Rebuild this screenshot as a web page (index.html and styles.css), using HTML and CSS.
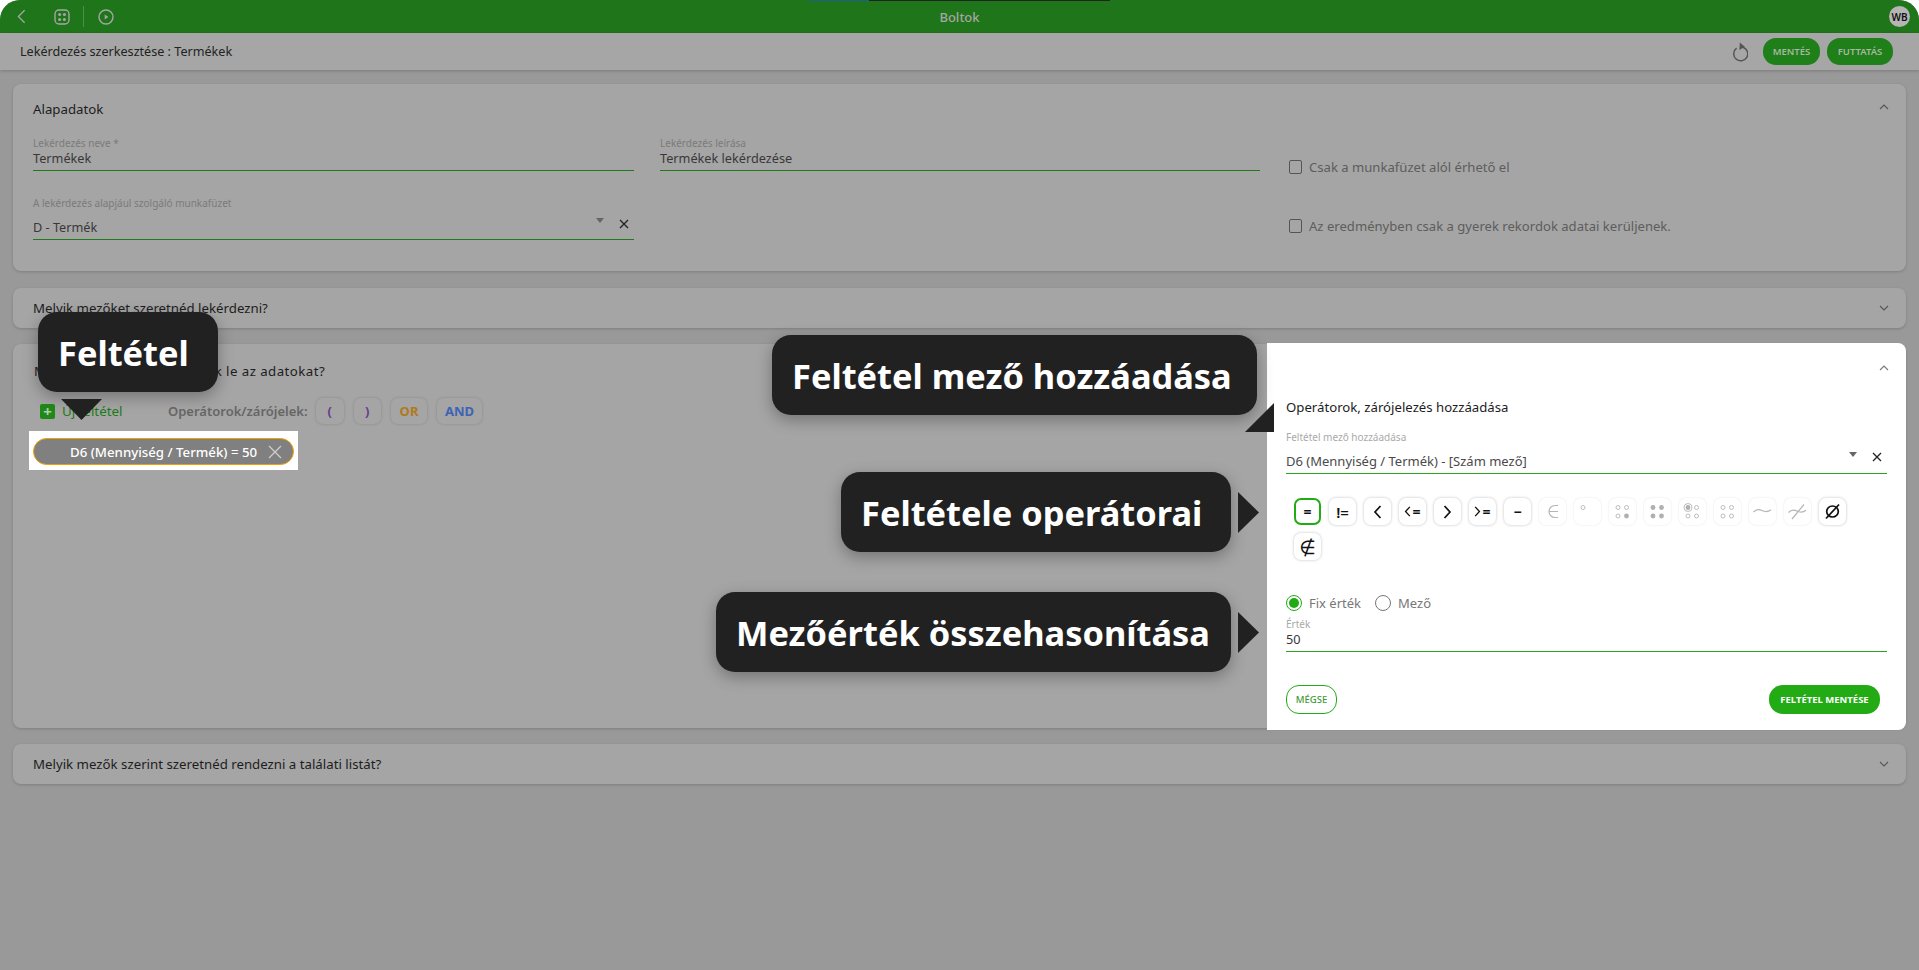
FILE: index.html
```html
<!DOCTYPE html>
<html lang="en">
<head>
  <meta charset="UTF-8">
  <title>Lekérdezés szerkesztése</title>
  <link rel="stylesheet" href="styles.css">
</head>
<body>
  <div class="app">
    <div class="progress"><span class="progress-done"></span><span class="progress-rest"></span></div>

    <header class="topbar">
      <div class="topbar-left">
        <svg class="top-icon back" viewBox="0 0 10 16"><path d="M8.5 1 1.5 8l7 7"/></svg>
        <svg class="top-icon grid-icon" viewBox="0 0 16 16"><rect x="1" y="1" width="14" height="14" rx="4"/><circle class="dot" cx="5.6" cy="5.6" r="1.5"/><circle class="dot" cx="10.4" cy="5.6" r="1.5"/><circle class="dot" cx="5.6" cy="10.4" r="1.5"/><circle class="dot" cx="10.4" cy="10.4" r="1.5"/></svg>
        <span class="top-sep"></span>
        <svg class="top-icon play" viewBox="0 0 16 16"><circle cx="8" cy="8" r="7"/><path class="dot" d="M6.7 5.4 10.4 8l-3.7 2.6z"/></svg>
      </div>
      <div class="topbar-title">Boltok</div>
      <div class="topbar-right"><span class="avatar">WB</span></div>
    </header>

    <div class="subbar">
      <div class="subbar-title">Lekérdezés szerkesztése : Termékek</div>
      <svg class="refresh" viewBox="0 0 16 20"><path d="M4.6 6.2a7 7 0 1 0 6.4-1"/><path class="fill" d="M7.8 0.6 12.8 4.8 7.4 8z"/></svg>
      <button class="btn-top btn-save">MENTÉS</button>
      <button class="btn-top btn-run">FUTTATÁS</button>
    </div>

    <main class="content">
      <section class="card card-base">
        <div class="card-title">Alapadatok</div>
        <svg class="chev chev-abs" viewBox="0 0 10 6"><path d="M1 5 5 1l4 4"/></svg>
        <div class="base-grid">
          <div class="field">
            <div class="field-label">Lekérdezés neve *</div>
            <div class="field-value">Termékek</div>
          </div>
          <div class="field">
            <div class="field-label">Lekérdezés leírása</div>
            <div class="field-value">Termékek lekérdezése</div>
          </div>
          <label class="check check-first"><span class="box"></span>Csak a munkafüzet alól érhető el</label>

          <div class="field field-select">
            <div class="field-label">A lekérdezés alapjául szolgáló munkafüzet</div>
            <div class="select-row">
              <div class="field-value">D - Termék</div>
              <span class="caret"></span>
              <svg class="clear" viewBox="0 0 10 10"><path d="M1 1l8 8M9 1 1 9"/></svg>
            </div>
          </div>
          <div></div>
          <label class="check check-second"><span class="box"></span>Az eredményben csak a gyerek rekordok adatai kerüljenek.</label>
        </div>
      </section>

      <section class="card card-row">
        <div class="card-title">Melyik mezőket szeretnéd lekérdezni?</div>
        <svg class="chev" viewBox="0 0 10 6"><path d="M1 1l4 4 4-4"/></svg>
      </section>

      <section class="card card-filter">
        <div class="filter-left">
          <div class="card-title filter-title">Milyen szűrés alapján kérjük le az adatokat?</div>
          <div class="toolbar">
            <span class="new-cond"><span class="plus">+</span>Új feltétel</span>
            <span class="ops-label">Operátorok/zárójelek:</span>
            <span class="tool tool-paren">(</span>
            <span class="tool tool-paren">)</span>
            <span class="tool tool-or">OR</span>
            <span class="tool tool-and">AND</span>
          </div>
          <div class="spot">
            <div class="chip">
              <span>D6 (Mennyiség / Termék) = 50</span>
              <svg class="chip-x" viewBox="0 0 14 14"><path d="M1 1l12 12M13 1 1 13"/></svg>
            </div>
          </div>
        </div>

        <div class="panel">
          <div class="panel-top"><svg class="chev chev-light" viewBox="0 0 10 6"><path d="M1 5 5 1l4 4"/></svg></div>
          <div class="panel-title">Operátorok, zárójelezés hozzáadása</div>
          <div class="field field-light field-cond">
            <div class="field-label">Feltétel mező hozzáadása</div>
            <div class="select-row">
              <div class="field-value">D6 (Mennyiség / Termék) - [Szám mező]</div>
              <span class="caret"></span>
              <svg class="clear" viewBox="0 0 10 10"><path d="M1 1l8 8M9 1 1 9"/></svg>
            </div>
          </div>

          <div class="op-list">
            <span class="op op-active">=</span>
            <span class="op op-ne">!=</span>
            <span class="op"><svg class="op-chev" viewBox="0 0 9 14"><path d="M7.5 1 2 7l5.5 6"/></svg></span>
            <span class="op"><svg class="op-chev op-chev-s" viewBox="0 0 9 14"><path d="M7.5 1 2 7l5.5 6"/></svg>=</span>
            <span class="op"><svg class="op-chev" viewBox="0 0 9 14"><path d="M1.5 1 7 7l-5.5 6"/></svg></span>
            <span class="op"><svg class="op-chev op-chev-s" viewBox="0 0 9 14"><path d="M1.5 1 7 7l-5.5 6"/></svg>=</span>
            <span class="op">−</span>
            <span class="op op-off"><svg class="op-svg" viewBox="0 0 27 27"><path class="stroke" d="M19 7.5h-3a6 6 0 0 0 0 12h3M10 13.5h9"/></svg></span>
            <span class="op op-off"><svg class="op-svg" viewBox="0 0 27 27"><circle class="ring" cx="9" cy="9.5" r="2"/></svg></span>
            <span class="op op-off"><svg class="op-svg" viewBox="0 0 27 27"><circle class="ring" cx="9" cy="9.5" r="2"/><circle class="ring" cx="17.5" cy="9.5" r="2"/><circle class="ring" cx="9" cy="18" r="2"/><circle class="solid" cx="17.5" cy="18" r="2.4"/></svg></span>
            <span class="op op-off"><svg class="op-svg" viewBox="0 0 27 27"><circle class="solid" cx="9" cy="9.5" r="2.4"/><circle class="solid" cx="17.5" cy="9.5" r="2.4"/><circle class="solid" cx="9" cy="18" r="2.4"/><circle class="solid" cx="17.5" cy="18" r="2.4"/></svg></span>
            <span class="op op-off"><svg class="op-svg" viewBox="0 0 27 27"><circle class="ring" cx="9" cy="9.5" r="4"/><circle class="solid" cx="9" cy="9.5" r="2.4"/><circle class="ring" cx="17.5" cy="9.5" r="2"/><circle class="ring" cx="9" cy="18" r="2"/><circle class="ring" cx="17.5" cy="18" r="2"/></svg></span>
            <span class="op op-off"><svg class="op-svg" viewBox="0 0 27 27"><circle class="ring" cx="9" cy="9.5" r="2"/><circle class="ring" cx="17.5" cy="9.5" r="2"/><circle class="ring" cx="9" cy="18" r="2"/><circle class="ring" cx="17.5" cy="18" r="2"/></svg></span>
            <span class="op op-off"><svg class="op-svg" viewBox="0 0 27 27"><path class="stroke" d="M4.5 14c3-3.5 5.500-3 8.500-1.500s5.500 2 9-.8"/></svg></span>
            <span class="op op-off"><svg class="op-svg" viewBox="0 0 27 27"><path class="stroke" d="M4.500 14.500c3-3.500 5.500-3 8.500-1.500s5.500 2 9-.8M8 21 20 6.500"/></svg></span>
            <span class="op"><svg class="op-svg" viewBox="0 0 27 27"><ellipse class="stroke-dark" cx="13.5" cy="13.5" rx="5.8" ry="5.5"/><path class="stroke-dark" d="M7 20.5 20 6.500"/></svg></span>
            <span class="op op-notin">∉</span>
          </div>

          <div class="radios">
            <label class="radio"><span class="radio-dot radio-on"></span>Fix érték</label>
            <label class="radio"><span class="radio-dot"></span>Mező</label>
          </div>
          <div class="field field-light field-value-box">
            <div class="field-label">Érték</div>
            <div class="field-value">50</div>
          </div>
          <div class="actions">
            <button class="btn-outline">MÉGSE</button>
            <button class="btn-solid">FELTÉTEL MENTÉSE</button>
          </div>
        </div>
      </section>

      <section class="card card-row">
        <div class="card-title">Melyik mezők szerint szeretnéd rendezni a találati listát?</div>
        <svg class="chev" viewBox="0 0 10 6"><path d="M1 1l4 4 4-4"/></svg>
      </section>
    </main>

    <!-- magyarazo buborekok a kepernyo folott -->
    <div class="tip tip-cond">Feltétel<span class="arrow arrow-down"></span></div>
    <div class="tip tip-field">Feltétel mező hozzáadása<span class="arrow arrow-corner"></span></div>
    <div class="tip tip-ops">Feltétele operátorai<span class="arrow arrow-right"></span></div>
    <div class="tip tip-compare">Mezőérték összehasonítása<span class="arrow arrow-right"></span></div>
  </div>
</body>
</html>
```

FILE: styles.css
```css
* {
  box-sizing: border-box;
}
html, body {
  margin: 0;
  background-color: #fff;
}
body {
  font-family: "Noto Sans", sans-serif;
  font-size: 13px;
  color: #1d1d1d;
}
.app {
  position: relative;
  width: 1919px;
  height: 970px;
  overflow: hidden;
  background-color: #999;
  border-radius: 20px 20px 0 0;
}
button {
  font-family: inherit;
  border: 0;
  padding: 0;
}

/* top */
.progress {
  position: absolute;
  top: 0;
  left: 809px;
  display: flex;
  height: 1px;
}
.progress-done {
  width: 60px;
  background-color: #1a5f8f;
}
.progress-rest {
  width: 241px;
  background-color: #222;
}
.topbar {
  display: grid;
  grid-template-columns: 1fr auto 1fr;
  align-items: center;
  height: 33px;
  background-color: #1f7519;
  color: #a6a6a6;
}
.topbar-left {
  display: flex;
  align-items: center;
  padding-left: 17px;
}
.top-icon {
  fill: none;
  stroke: #a6a6a6;
  stroke-width: 1.4;
}
.top-icon .dot {
  fill: #a6a6a6;
  stroke: none;
}
.back {
  width: 9px;
  height: 15px;
}
.grid-icon {
  width: 16px;
  height: 16px;
  margin-left: 28px;
}
.top-sep {
  width: 1px;
  height: 21px;
  margin-left: 13px;
  background-color: #4d8f48;
}
.play {
  width: 16px;
  height: 16px;
  margin-left: 14px;
}
.topbar-title {
  font-size: 13px;
  font-weight: 500;
}
.topbar-right {
  display: flex;
  justify-content: flex-end;
  padding-right: 9px;
}
.avatar {
  display: flex;
  align-items: center;
  justify-content: center;
  width: 21px;
  height: 21px;
  border-radius: 50%;
  background-color: #b5b5b5;
  color: #111;
  font-size: 10px;
  font-weight: 600;
}
.subbar {
  display: flex;
  align-items: center;
  height: 37px;
  padding: 0 26px 0 20px;
  background-color: #a6a6a6;
  box-shadow: 0 1px 3px rgba(0, 0, 0, .2);
  position: relative;
}
.subbar-title {
  flex: 1;
  font-size: 12.6px;
  color: #222;
}
.refresh {
  width: 16px;
  height: 20px;
  margin-right: 15px;
  fill: none;
  stroke: #555;
  stroke-width: 1.5;
}
.refresh .fill {
  fill: #555;
  stroke: none;
}
.btn-top {
  height: 27px;
  border-radius: 13px;
  background-color: #1f7f19;
  color: #a8b8a4;
  font-size: 9.5px;
  font-weight: 600;
}
.btn-save {
  width: 57px;
}
.btn-run {
  width: 66px;
  margin-left: 7px;
}

/* cards */
.content {
  display: flex;
  flex-direction: column;
  gap: 16px;
  padding: 14px 13px 0;
}
.card {
  position: relative;
  background-color: #a5a5a5;
  border-radius: 8px;
  box-shadow: 0 1px 3px rgba(0, 0, 0, .18);
}
.card-title {
  font-size: 13.25px;
  line-height: 20px;
  color: #1d1d1d;
}
.card-base {
  height: 187px;
  margin-bottom: 1px;
  padding: 15px 0 0 20px;
}
.chev {
  width: 10px;
  height: 6px;
  fill: none;
  stroke: #555;
  stroke-width: 1.1;
}
.chev-abs {
  position: absolute;
  top: 20px;
  right: 17px;
}
.chev-light {
  margin-right: -2px;
  stroke: #777;
}
.card-row {
  display: flex;
  align-items: center;
  justify-content: space-between;
  height: 40px;
  padding: 0 17px 0 20px;
}
.base-grid {
  display: grid;
  grid-template-columns: 601px 600px 1fr;
  column-gap: 26px;
  row-gap: 26px;
  margin-top: 18px;
}
.field {
  border-bottom: 1px solid #1f7a19;
}
.field-label {
  height: 12px;
  font-size: 10px;
  line-height: 12px;
  color: #7b7b7b;
}
.field-value {
  height: 21px;
  font-size: 12.7px;
  line-height: 19px;
  color: #383838;
}
.select-row {
  display: flex;
  align-items: flex-start;
  padding: 9px 5px 0 0;
}
.select-row .field-value {
  flex: 1;
}
.caret {
  width: 0;
  height: 0;
  margin-right: 15px;
  border-left: 4px solid transparent;
  border-right: 4px solid transparent;
  border-top: 5px solid #666;
}
.clear {
  width: 10px;
  height: 10px;
  margin-top: 1px;
  fill: none;
  stroke: #222;
  stroke-width: 1.3;
}
.check {
  display: flex;
  align-items: center;
  gap: 7px;
  align-self: end;
  margin-left: 3px;
  font-size: 13.1px;
  color: #5d5d5d;
}
.check-first {
  margin-bottom: -5px;
}
.check-second {
  margin-bottom: 5px;
}
.box {
  width: 13px;
  height: 14px;
  border: 1px solid #555;
  border-radius: 2px;
}

/* filter card */
.card-filter {
  display: flex;
  height: 384px;
}
.filter-left {
  flex: 1;
  padding: 17px 0 0 21px;
}
.filter-title {
  letter-spacing: .45px;
}
.toolbar {
  display: flex;
  align-items: center;
  height: 26px;
  margin-top: 17px;
  padding-left: 6px;
}
.new-cond {
  display: flex;
  align-items: center;
  width: 128px;
  color: #1c7a17;
  font-size: 13.4px;
}
.plus {
  display: flex;
  align-items: center;
  justify-content: center;
  width: 15px;
  height: 15px;
  margin-right: 7px;
  border-radius: 2px;
  background-color: #1f8a18;
  color: #b5c9b2;
  font-size: 15px;
  font-weight: 700;
}
.ops-label {
  width: 148px;
  font-size: 13px;
  font-weight: 600;
  color: #666;
}
.tool {
  display: flex;
  align-items: center;
  justify-content: center;
  height: 26px;
  margin-right: 10px;
  border-radius: 7px;
  box-shadow: 0 0 3px rgba(0, 0, 0, .18);
  font-size: 13px;
  font-weight: 700;
}
.tool-paren {
  width: 27.5px;
  color: #6a3d8e;
}
.tool-or {
  width: 36px;
  color: #b07a1c;
}
.tool-and {
  width: 45px;
  color: #3e63b5;
}
.spot {
  display: flex;
  width: 269px;
  height: 39px;
  margin: 7px 0 0 -5px;
  padding: 7px 4px 0;
  background-color: #fff;
}
.chip {
  display: flex;
  align-items: center;
  justify-content: space-between;
  width: 261px;
  height: 27px;
  padding: 0 11px 0 36px;
  border: 1.5px solid #f2a100;
  border-radius: 14px;
  background-color: #808080;
  color: #fff;
  font-size: 13.25px;
  font-weight: 500;
}
.chip-x {
  width: 14px;
  height: 14px;
  fill: none;
  stroke: #cfcfcf;
  stroke-width: 1.2;
}
.panel {
  flex-shrink: 0;
  width: 639px;
  height: 387px;
  margin-top: -1px;
  padding: 18px 19px 0;
  background-color: #fff;
  border-radius: 0 8px 8px 0;
}
.panel-top {
  display: flex;
  justify-content: flex-end;
  align-items: center;
  height: 14px;
}
.panel-title {
  margin-top: 22px;
  font-size: 13.2px;
  line-height: 20px;
  color: #1d1d1d;
}
.field-light {
  border-bottom-color: #2aa51e;
}
.field-light .field-label {
  color: #aaa;
}
.field-cond {
  margin-top: 14px;
}
.field-cond .select-row {
  padding-top: 9px;
}
.field-cond .clear {
  margin-top: 0;
}
.field-cond .field-value {
  font-size: 13px;
  line-height: 18px;
  color: #4a4a4a;
}
.op-list {
  display: flex;
  flex-wrap: wrap;
  gap: 8px;
  width: 570px;
  margin-top: 24px;
  padding-left: 8px;
}
.op {
  display: flex;
  align-items: center;
  justify-content: center;
  width: 27px;
  height: 27px;
  border-radius: 7px;
  box-shadow: 0 0 3px rgba(0, 0, 0, .25);
  font-size: 14px;
  font-weight: 700;
  color: #111;
}
.op-ne {
  font-size: 15px;
  font-weight: 600;
}
.op-active {
  border: 2px solid #22ab14;
  box-shadow: none;
}
.op-off {
  box-shadow: 0 0 2px rgba(0, 0, 0, .12);
}
.op-chev {
  width: 9px;
  height: 14px;
  fill: none;
  stroke: #111;
  stroke-width: 1.7;
}
.op-chev-s {
  width: 7px;
  height: 11px;
  margin-right: 1px;
}
.op-svg {
  width: 27px;
  height: 27px;
  fill: none;
}
.op-svg .stroke {
  stroke: #b5b5b5;
  stroke-width: 1.2;
}
.op-svg .stroke-dark {
  fill: none;
  stroke: #111;
  stroke-width: 1.7;
}
.op-svg .ring {
  stroke: #b5b5b5;
  stroke-width: .9;
}
.op-svg .solid {
  fill: #b0b0b0;
}
.op-notin {
  font-family: "DejaVu Sans", sans-serif;
  font-size: 19px;
  font-weight: 400;
}
.radios {
  display: flex;
  gap: 14px;
  height: 20px;
  margin-top: 33px;
}
.radio {
  display: flex;
  align-items: center;
  gap: 7px;
  font-size: 13px;
  color: #777;
}
.radio-dot {
  display: flex;
  align-items: center;
  justify-content: center;
  width: 16px;
  height: 16px;
  border: 1px solid #777;
  border-radius: 50%;
}
.radio-on {
  border-color: #22ab14;
}
.radio-on::after {
  content: "";
  width: 10px;
  height: 10px;
  border-radius: 50%;
  background-color: #22ab14;
}
.field-value-box {
  margin-top: 5px;
}
.actions {
  display: flex;
  justify-content: space-between;
  margin-top: 33px;
  padding-right: 7px;
}
.btn-outline {
  width: 51px;
  height: 29px;
  border: 1px solid #22ab14;
  border-radius: 13px;
  background-color: #fff;
  color: #3f9c36;
  font-size: 9.5px;
  font-weight: 500;
}
.btn-solid {
  width: 111px;
  height: 29px;
  border-radius: 14px;
  background-color: #22ab14;
  color: #fff;
  font-size: 9.5px;
  font-weight: 700;
}

/* tips */
.tip {
  position: absolute;
  display: flex;
  align-items: center;
  height: 80px;
  padding: 1px 0 0 20px;
  border-radius: 19px;
  background-color: #212121;
  box-shadow: 0 5px 16px rgba(0, 0, 0, .3);
  color: #fff;
  font-size: 34.4px;
  font-weight: 700;
  white-space: nowrap;
}
.arrow {
  position: absolute;
  width: 21px;
  height: 41px;
  background-color: #212121;
}
.arrow-right {
  left: 100%;
  top: 20px;
  margin-left: 7px;
  clip-path: polygon(0 0, 100% 50%, 0 100%);
}
.arrow-down {
  top: 87px;
  left: 23px;
  width: 41px;
  height: 21px;
  clip-path: polygon(0 0, 100% 0, 50% 100%);
}
.arrow-corner {
  top: 68px;
  left: 473px;
  width: 29px;
  height: 29px;
  clip-path: polygon(100% 0, 100% 100%, 0 100%);
}
.tip-cond {
  top: 312px;
  left: 38px;
  width: 180px;
}
.tip-field {
  top: 335px;
  left: 772px;
  width: 485px;
}
.tip-ops {
  top: 472px;
  left: 841px;
  width: 390px;
}
.tip-compare {
  top: 592px;
  left: 716px;
  width: 515px;
}
```
